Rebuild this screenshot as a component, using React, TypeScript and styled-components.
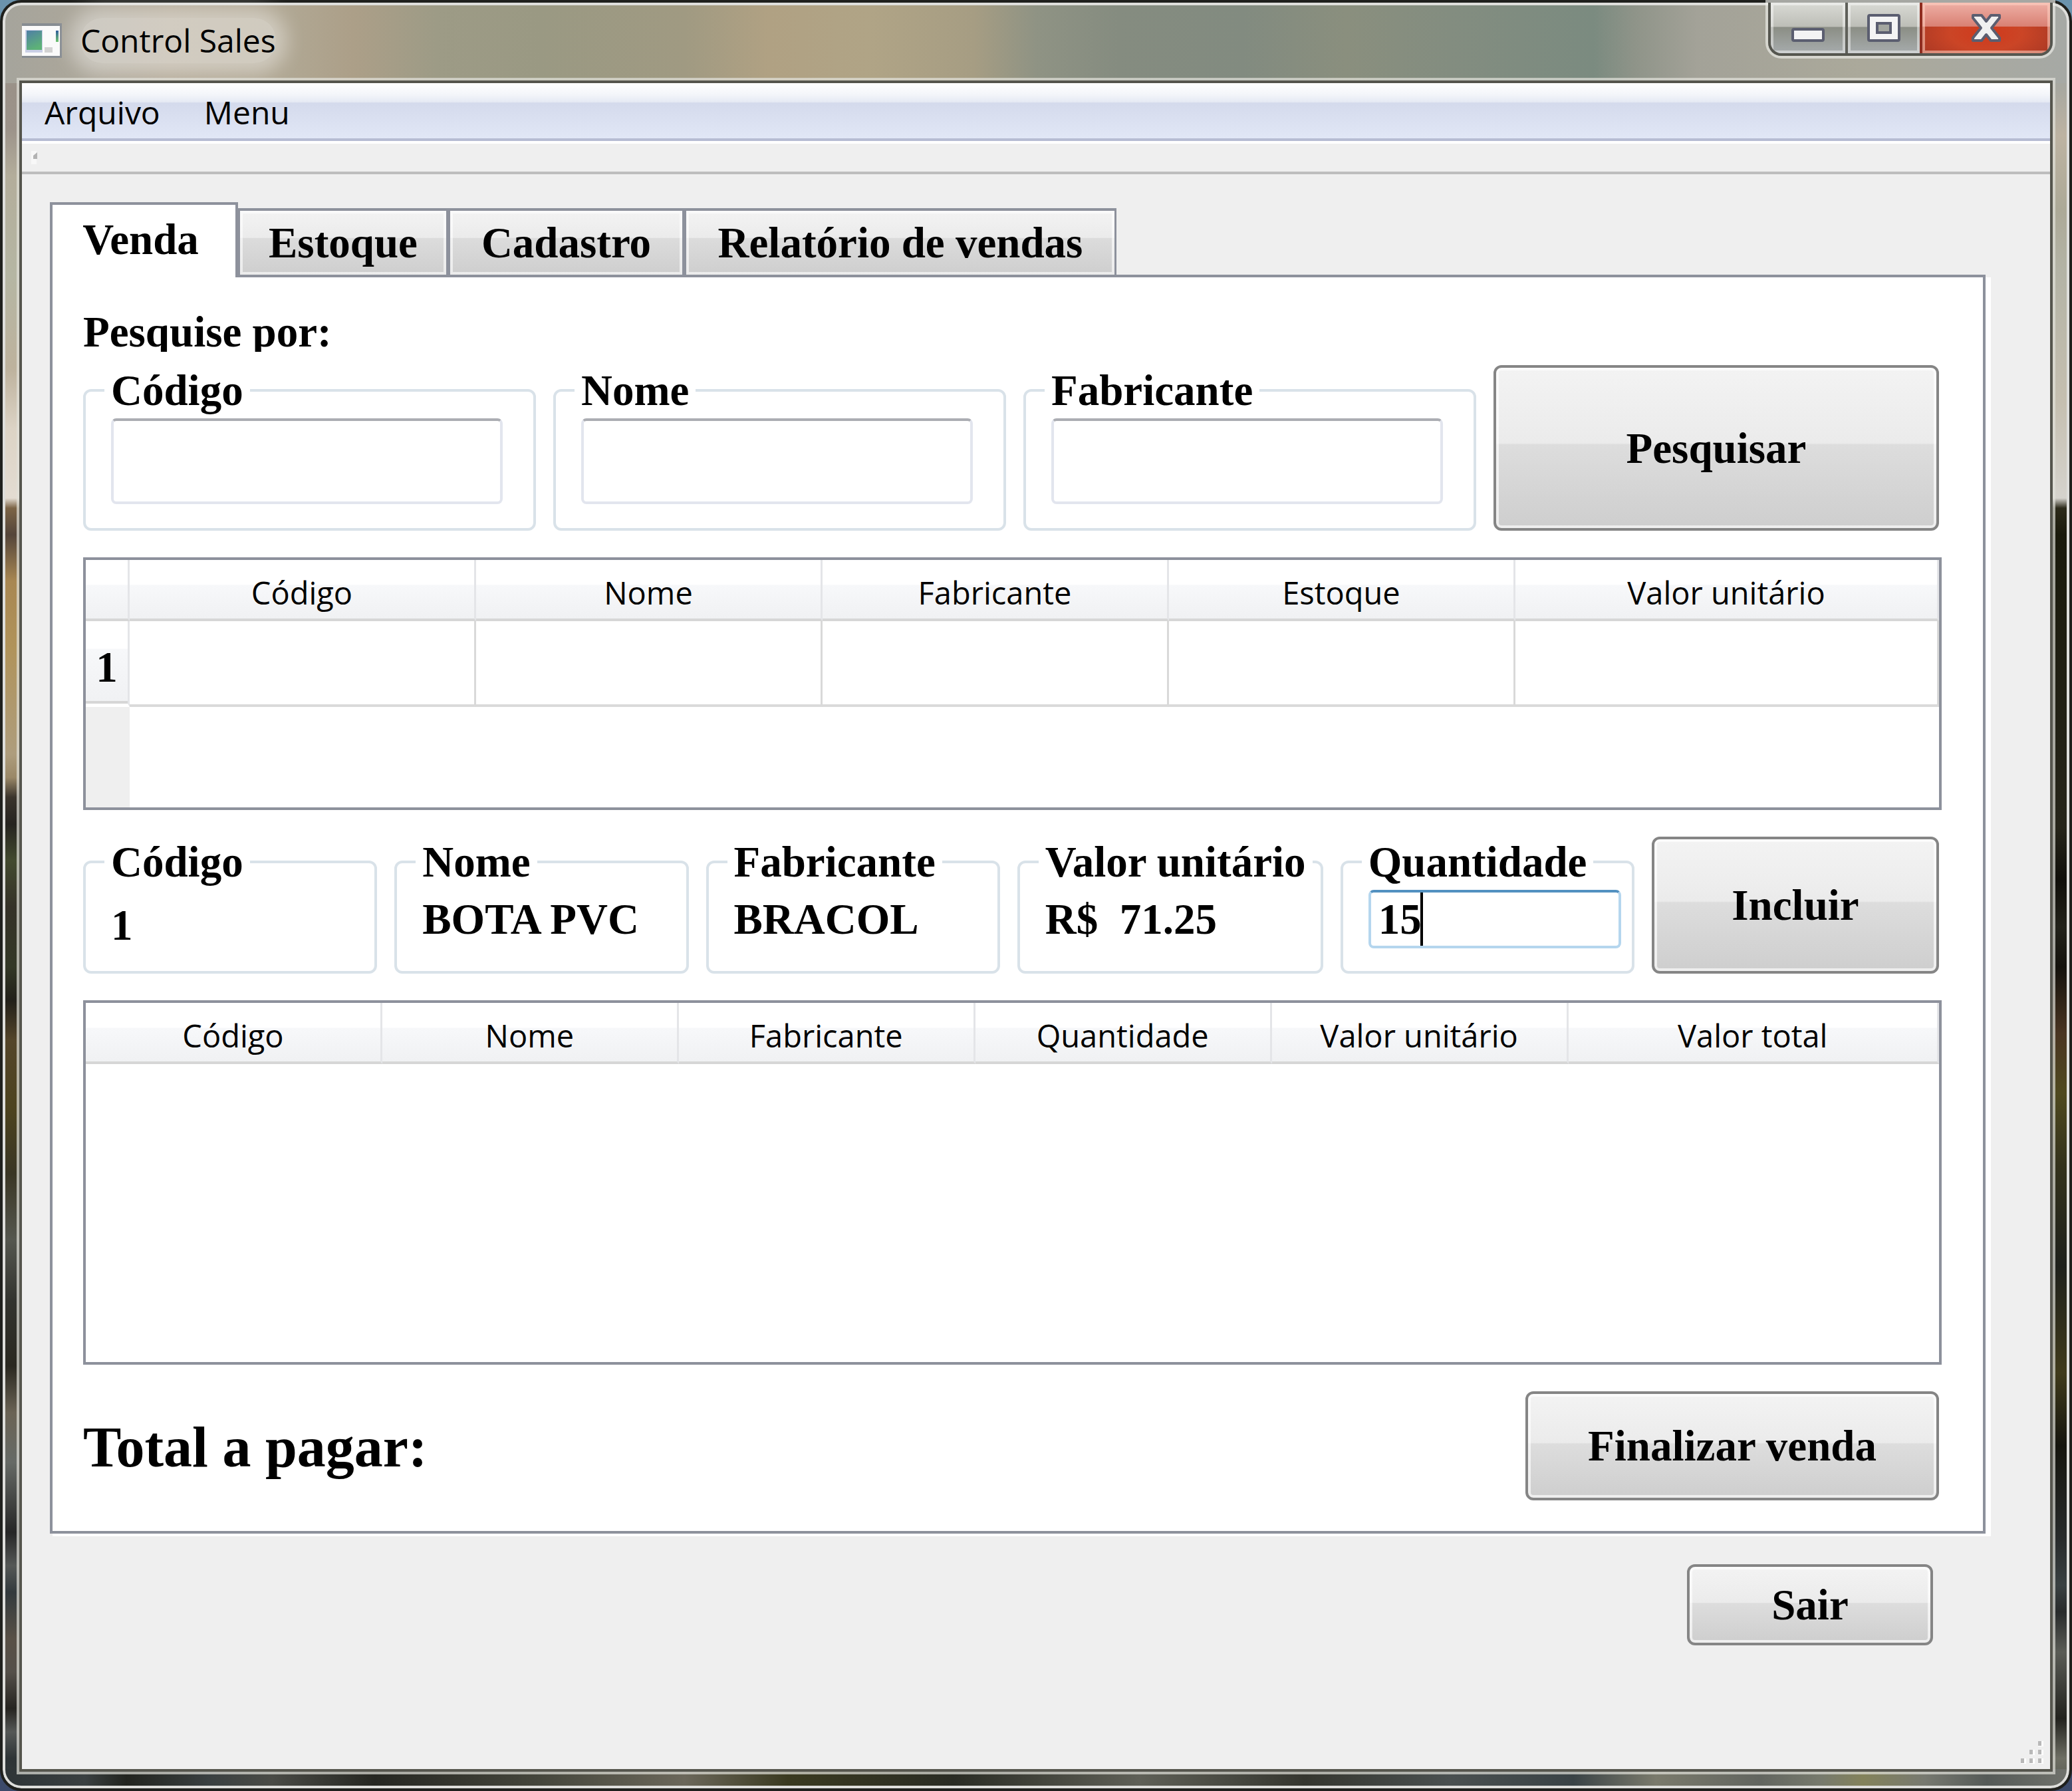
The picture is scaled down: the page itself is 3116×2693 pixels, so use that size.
import React, { useState } from "react";
import styled, { createGlobalStyle, css } from "styled-components";

const serif = `"Liberation Serif", "Times New Roman", serif`;
const sans = `"Open Sans", "Segoe UI", sans-serif`;
const line = "#8d919c";

const Global = createGlobalStyle`
  *, *::before, *::after { box-sizing: border-box; }
  body { margin: 0; font-family: ${sans}; font-size: 48px; color: #000; }
  button, input { font: inherit; color: inherit; margin: 0; }
`;

const leftGlass = `linear-gradient(180deg, #a5a49c 0, #9a9188 130px, #9c938a 190px, #b3ad9b 260px, #b5b6a3 410px,
  #bdb29d 550px, #dcd3c5 640px, #e3dcd2 745px, #7c6446 760px, #54453a 800px, #a88752 870px, #b0935a 970px,
  #ae9d7d 1130px, #9a8868 1165px, #3a342c 1195px, #262420 1235px, #434a2f 1290px, #353228 1360px,
  #333826 1450px, #22201a 1500px, #54452a 1560px, #4d431f 1660px, #3a3624 1760px, #55574f 1860px,
  #33342f 1950px, #2a2820 2050px, #6a6355 2120px, #666a66 2195px, #262626 2300px, #555856 2350px,
  #333a3d 2390px, #585046 2460px, #55504a 2510px, #262420 2565px, #555856 2600px, #2e3436 2640px, #343a3c 100%)`;
const rightGlass = `linear-gradient(180deg, #9fa7a7 0, #a8a8a0 130px, #bdb3a2 200px, #aca997 310px, #b3b3a5 400px,
  #c5bfb0 600px, #d5d3cd 745px, #2c2a1a 760px, #1a1a0c 800px, #26251a 1240px, #100f0a 1320px, #22221a 1390px,
  #14120c 1450px, #4a3522 1550px, #4f491f 1640px, #33321c 1750px, #1f211c 1900px, #403b1c 2060px,
  #15150e 2170px, #282b2b 2310px, #3a4142 2380px, #282b2b 2420px, #5a5c56 2480px, #22221e 2580px, #6e6f64 2640px, #55574f 100%)`;
const bottomGlass = `linear-gradient(90deg, #2e3436 0, #3a4041 4%, #22241f 6%, #3a4041 10%, #4a4b46 13%, #262722 18%,
  #45463c 26%, #6b675a 33%, #3a3a20 38%, #2a2c24 46%, #5f6057 55%, #35362f 63%, #4a5050 70%, #3a4346 76%,
  #7a7a6c 80%, #62655f 85%, #777a6d 88%, #83825b 90%, #777970 93%, #555a57 96%, #70726c 100%)`;
const topGlass = `linear-gradient(90deg, #a5a49c 0, #b4aa98 8%, #b0a793 14%, #ac9f88 17%, #9d9b86 21%, #9a9983 26%,
  #a09a82 33%, #b0a183 37%, #b0a486 42%, #a69d83 47%, #8f9384 50%, #858c80 54%, #828b80 60%, #8a8f7e 65%,
  #838d80 70%, #7b8b80 77%, #8f9489 79%, #a3a298 82%, #aba99b 90%, #a6a9a5 100%)`;

const Desktop = styled.div`
  min-height: 100vh;
  display: flex;
  background: linear-gradient(180deg, #6b93ad 0, #5b7d9b 50%, #3c4a6a 100%);
`;

const Frame = styled.main`
  flex: 1;
  min-width: 0;
  display: flex;
  flex-direction: column;
  padding: 0 25px 25px;
  border: 4px solid #1f201d;
  border-radius: 32px;
  box-shadow: inset 0 0 0 4px #dededb;
  background:
    ${topGlass} 0 0 / 100% 121px no-repeat,
    ${bottomGlass} 0 100% / 100% 29px no-repeat,
    ${leftGlass} 0 0 / 50% 100% no-repeat,
    ${rightGlass} 100% 0 / 50% 100% no-repeat;
`;

const TitleBar = styled.header`
  height: 117px;
  display: flex;
  align-items: flex-start;
  justify-content: space-between;
`;

const Caption = styled.div`
  display: flex;
  align-items: center;
  gap: 28px;
  padding: 23px 0 0 4px;
`;

const Title = styled.h1`
  margin: 0;
  font-size: 48px;
  line-height: 68px;
  font-weight: 400;
  border-radius: 32px;
  background: rgba(255, 255, 255, 0.4);
  box-shadow: 0 0 28px 16px rgba(255, 255, 255, 0.4);
`;

const Controls = styled.div`
  display: flex;
  border: 4px solid #55564f;
  border-top: 0;
  border-radius: 0 0 20px 20px;
  box-shadow: 0 0 0 4px rgba(240, 240, 235, 0.65);
  overflow: hidden;
`;

const Control = styled.button<{ $kind: "min" | "max" | "close" }>`
  height: 76px;
  padding: 0;
  border: 0;
  display: flex;
  align-items: center;
  justify-content: center;
  width: ${(p) => ({ min: 116, max: 112, close: 192 })[p.$kind]}px;
  ${(p) =>
    p.$kind === "close"
      ? css`
          background:
            linear-gradient(180deg, #eeb0a6 0, #d98073 47%, transparent 47%),
            radial-gradient(ellipse at 50% 60%, #d0391c 0, #cb4526 40%, #9e3424 100%);
          box-shadow: inset 0 0 0 4px rgba(255, 210, 195, 0.55);
        `
      : css`
          border-right: 4px solid ${p.$kind === "max" ? "#8f2d20" : "#5f605a"};
          background: linear-gradient(180deg, #d9dad5 0, #bdbeb7 47%, #8b8e85 49%, #a7acad 100%);
          box-shadow: inset 0 0 0 4px rgba(255, 255, 255, 0.45);
        `}
`;

const Client = styled.div`
  flex: 1;
  display: flex;
  flex-direction: column;
  border: 4px solid #55554d;
  box-shadow: 0 0 0 4px rgba(225, 225, 218, 0.7);
  background: #efefef;
`;

const MenuBar = styled.nav`
  height: 87px;
  display: flex;
  align-items: center;
  gap: 66px;
  padding: 5px 34px 0;
  border-bottom: 4px solid #b6bcd3;
  background: linear-gradient(180deg, #fff 0, #f4f6fa 20%, #e6eaf4 34%, #d4daec 36%, #e1e7f6 100%);
`;

const MenuItem = styled.button`
  padding: 0;
  border: 0;
  background: none;
  line-height: 68px;
`;

const ToolStrip = styled.div`
  height: 50px;
  display: flex;
  align-items: center;
  padding-left: 14px;
  border-top: 4px solid #fff;
  border-bottom: 4px solid #bdbdbd;
`;

const Content = styled.div`
  flex: 1;
  display: flex;
  flex-direction: column;
  padding: 42px 97px 0 42px;
`;

const Tabs = styled.div`
  display: flex;
  align-items: flex-end;
  height: 109px;
`;

const Tab = styled.button<{ $width: number; $active: boolean }>`
  width: ${(p) => p.$width}px;
  height: 100px;
  padding: 0;
  white-space: nowrap;
  font: bold 65px/76px ${serif};
  border: 4px solid ${line};
  border-left-width: 3px;
  border-right-width: 3px;
  border-bottom: 0;
  background: linear-gradient(180deg, #f3f3f3 0, #ebebeb 42%, #dcdcdc 43%, #cecece 100%);
  box-shadow: inset 0 0 0 4px rgba(255, 255, 255, 0.6);
  ${(p) =>
    p.$active &&
    css`
      position: relative;
      height: 113px;
      margin-bottom: -4px;
      padding: 0 10px 6px 0;
      border-left-width: 4px;
      border-right-width: 4px;
      background: #fff;
      box-shadow: none;
    `}
`;

const Panel = styled.section`
  display: flex;
  flex-direction: column;
  gap: 40px;
  padding: 44px 62px 46px 46px;
  border: 4px solid ${line};
  background: #fff;
  box-shadow: 4px 4px 0 #fff, 8px 4px 0 #fff;
`;

const Search = styled.div`
  display: flex;
  flex-direction: column;
  gap: 20px;
`;

const SearchTitle = styled.h2`
  margin: 0;
  height: 68px;
  overflow: hidden;
  font: bold 65px/76px ${serif};
`;

const FieldRow = styled.form<{ $columns: string; $height: number }>`
  display: grid;
  grid-template-columns: ${(p) => p.$columns};
  column-gap: 26px;
  height: ${(p) => p.$height}px;
  margin-right: 4px;
`;

const Group = styled.fieldset<{ $right?: number }>`
  min-width: 0;
  margin: 0;
  padding: 4px ${(p) => p.$right ?? 16}px 0 38px;
  border: 4px solid #d9e2e9;
  border-radius: 12px;
  font: bold 65px/76px ${serif};
`;

const Legend = styled.legend`
  margin-left: -10px;
  padding: 0 10px;
  white-space: nowrap;
`;

const Value = styled.output<{ $tall?: boolean }>`
  display: block;
  white-space: pre;
  line-height: ${(p) => (p.$tall ? 106 : 88)}px;
`;

const SearchInput = styled.input`
  display: block;
  width: 100%;
  height: 129px;
  padding: 0 11px;
  border: 4px solid #e2e5ee;
  border-top-color: #abadb3;
  border-radius: 8px;
  background: #fff;
  outline: 0;
`;

const CaretBox = styled.div`
  position: relative;
`;

const QuantityInput = styled(SearchInput)`
  height: 88px;
  border-color: #b5d6ee;
  border-top-color: #5290c0;
  caret-color: transparent;
`;

const Caret = styled.span`
  position: absolute;
  top: 4px;
  bottom: 4px;
  left: 78px;
  width: 4px;
  background: #000;
`;

const PushButton = styled.button`
  padding: 0;
  border: 4px solid #858585;
  border-radius: 12px;
  font: bold 65px/76px ${serif};
  background: linear-gradient(180deg, #f3f3f3 0, #ebebeb 47%, #dddddd 48%, #cecece 100%);
  box-shadow: inset 0 0 0 4px rgba(255, 255, 255, 0.65);
`;

const WideButton = styled(PushButton)`
  width: 622px;
  height: 164px;
`;

const ExitButton = styled(PushButton)`
  width: 370px;
  height: 122px;
`;

const GridBox = styled.div<{ $height: number; $rowHeader?: boolean }>`
  height: ${(p) => p.$height}px;
  border: 4px solid ${line};
  background: ${(p) => (p.$rowHeader ? "linear-gradient(90deg, #efefef 66px, #fff 66px)" : "#fff")};
`;

const Table = styled.table`
  width: 100%;
  table-layout: fixed;
  border-collapse: separate;
  border-spacing: 0;
`;

const HeadCell = styled.th`
  height: 92px;
  padding: 10px 0 0;
  font-size: 47px;
  font-weight: 400;
  line-height: 68px;
  border-right: 3px solid #e4e5e8;
  border-bottom: 4px solid #d6d6d6;
  background: linear-gradient(180deg, #fff 0, #fff 42%, #f7f8fa 43%, #f0f1f3 100%);
`;

const RowHead = styled.th`
  height: 129px;
  padding: 14px 0 0;
  font: bold 65px/76px ${serif};
  border-right: 3px solid #e4e5e8;
  border-bottom: 5px solid #fff;
  background: linear-gradient(180deg, #fff 0, #fff 33%, #f7f8fa 34%, #f0f1f3 100%);
  box-shadow: inset 0 -4px 0 #d6d6d6;
`;

const Cell = styled.td`
  padding: 0;
  border-right: 3px solid #d9d9d9;
  border-bottom: 4px solid #dadada;
  background: #fff;
`;

const Footer = styled.div`
  display: flex;
  align-items: center;
  justify-content: space-between;
  margin-right: 4px;
`;

const Total = styled.p`
  margin: 0;
  padding-top: 4px;
  font: bold 86px/96px ${serif};
`;

const ExitBar = styled.div`
  display: flex;
  justify-content: flex-end;
  padding: 46px 79px 0 0;
`;

const StatusBar = styled.footer`
  display: flex;
  justify-content: flex-end;
  padding: 0 10px 6px 0;
`;

const AppIcon = () => (
  <svg width="60" height="54" viewBox="0 0 60 54" aria-hidden="true">
    <defs>
      <linearGradient id="screen" x1="0" y1="0" x2="0.4" y2="1">
        <stop offset="0" stopColor="#4f7fa6" />
        <stop offset="1" stopColor="#5db277" />
      </linearGradient>
      <linearGradient id="bar" x1="0" y1="0" x2="0" y2="1">
        <stop offset="0" stopColor="#2c5a9a" />
        <stop offset="1" stopColor="#6cc36a" />
      </linearGradient>
    </defs>
    <rect x="0" y="1" width="61" height="52" fill="#878c92" />
    <rect x="0" y="5" width="57" height="45" fill="#fafafa" />
    <rect x="5" y="11" width="26" height="34" fill="#c9cfe6" />
    <rect x="7" y="12" width="23" height="29" fill="url(#screen)" />
    <rect x="34" y="37" width="12" height="8" fill="#d2d2d2" />
    <rect x="51" y="12" width="4" height="17" fill="url(#bar)" />
  </svg>
);

const MinimizeIcon = () => (
  <svg width="50" height="42" viewBox="0 0 50 42" aria-hidden="true">
    <rect x="2" y="23" width="46" height="17" rx="2" fill="#f4f4f4" stroke="#5b5e70" strokeWidth="4" />
  </svg>
);

const MaximizeIcon = () => (
  <svg width="50" height="42" viewBox="0 0 50 42" aria-hidden="true">
    <rect x="2" y="2" width="46" height="38" rx="2" fill="#f4f4f4" stroke="#5b5e70" strokeWidth="4" />
    <rect x="15" y="14" width="20" height="14" fill="#a3a69f" stroke="#5b5e70" strokeWidth="4" />
  </svg>
);

const CloseIcon = () => (
  <svg width="46" height="42" viewBox="0 0 46 42" aria-hidden="true">
    <path
      d="M3 2h13l7 9 7-9h13v4L31 21l12 15v4H30l-7-9-7 9H3v-4l12-15L3 6z"
      fill="#f0f0f0"
      stroke="#5b5e70"
      strokeWidth="4"
      strokeLinejoin="round"
    />
  </svg>
);

const HandleDot = () => (
  <svg width="12" height="24" viewBox="0 0 12 24" aria-hidden="true">
    <rect x="0" y="2" width="8" height="20" fill="#f8f8f8" />
    <path d="M3 9l6-5v10H3z" fill="#b3b3b3" />
  </svg>
);

const SizeGrip = () => (
  <svg width="34" height="38" viewBox="0 0 34 38" aria-hidden="true">
    {[
      [26, 2],
      [13, 15],
      [26, 15],
      [0, 28],
      [13, 28],
      [26, 28],
    ].map(([x, y]) => (
      <g key={`${x}-${y}`}>
        <rect x={x} y={y} width="8" height="8" fill="#fff" />
        <rect x={x} y={y} width="5" height="7" fill="#b8b8b8" />
      </g>
    ))}
  </svg>
);

const tabs = [
  { label: "Venda", width: 283 },
  { label: "Estoque", width: 316 },
  { label: "Cadastro", width: 355 },
  { label: "Relatório de vendas", width: 650 },
];
const searchFields = ["Código", "Nome", "Fabricante"];
const stockColumns = ["Código", "Nome", "Fabricante", "Estoque", "Valor unitário"];
const item = [
  { label: "Código", value: "1", tall: true },
  { label: "Nome", value: "BOTA PVC" },
  { label: "Fabricante", value: "BRACOL" },
  { label: "Valor unitário", value: "R$  71.25" },
];
const saleColumns = ["Código", "Nome", "Fabricante", "Quantidade", "Valor unitário", "Valor total"];

const stay = (e: React.FormEvent) => e.preventDefault();

export default function App() {
  const [active, setActive] = useState("Venda");
  const [quantity, setQuantity] = useState("15");

  return (
    <Desktop>
      <Global />
      <Frame>
        <TitleBar>
          <Caption>
            <AppIcon />
            <Title>Control Sales</Title>
          </Caption>
          <Controls>
            <Control $kind="min" aria-label="Minimizar">
              <MinimizeIcon />
            </Control>
            <Control $kind="max" aria-label="Maximizar">
              <MaximizeIcon />
            </Control>
            <Control $kind="close" aria-label="Fechar">
              <CloseIcon />
            </Control>
          </Controls>
        </TitleBar>
        <Client>
          <MenuBar>
            <MenuItem>Arquivo</MenuItem>
            <MenuItem>Menu</MenuItem>
          </MenuBar>
          <ToolStrip>
            <HandleDot />
          </ToolStrip>
          <Content>
            <Tabs role="tablist">
              {tabs.map((t) => (
                <Tab
                  key={t.label}
                  role="tab"
                  aria-selected={t.label === active}
                  $active={t.label === active}
                  $width={t.width}
                  onClick={() => setActive(t.label)}
                >
                  {t.label}
                </Tab>
              ))}
            </Tabs>
            <Panel role="tabpanel">
              <Search>
                <SearchTitle>Pesquise por:</SearchTitle>
                <FieldRow $columns="1fr 1fr 1fr 670px" $height={249} onSubmit={stay}>
                  {searchFields.map((label) => (
                    <Group key={label} $right={46}>
                      <Legend>
                        <label htmlFor={`search-${label}`}>{label}</label>
                      </Legend>
                      <SearchInput id={`search-${label}`} type="text" />
                    </Group>
                  ))}
                  <PushButton type="submit">Pesquisar</PushButton>
                </FieldRow>
              </Search>

              <GridBox $height={380} $rowHeader>
                <Table>
                  <colgroup>
                    <col style={{ width: 66 }} />
                    {stockColumns.map((c, i) => (
                      <col key={c} style={i < 4 ? { width: 521 } : undefined} />
                    ))}
                  </colgroup>
                  <thead>
                    <tr>
                      <HeadCell />
                      {stockColumns.map((c) => (
                        <HeadCell key={c} scope="col">
                          {c}
                        </HeadCell>
                      ))}
                    </tr>
                  </thead>
                  <tbody>
                    <tr>
                      <RowHead scope="row">1</RowHead>
                      {stockColumns.map((c) => (
                        <Cell key={c} />
                      ))}
                    </tr>
                  </tbody>
                </Table>
              </GridBox>

              <FieldRow $columns="1fr 1fr 1fr 460px 1fr 432px" $height={206} onSubmit={stay}>
                {item.map((f) => (
                  <Group key={f.label}>
                    <Legend>{f.label}</Legend>
                    <Value $tall={f.tall}>{f.value}</Value>
                  </Group>
                ))}
                <Group>
                  <Legend>
                    <label htmlFor="quantity">Quantidade</label>
                  </Legend>
                  <CaretBox>
                    <QuantityInput
                      id="quantity"
                      type="text"
                      value={quantity}
                      onChange={(e) => setQuantity(e.target.value)}
                    />
                    <Caret />
                  </CaretBox>
                </Group>
                <PushButton type="submit">Incluir</PushButton>
              </FieldRow>

              <GridBox $height={548}>
                <Table>
                  <colgroup>
                    {saleColumns.map((c, i) => (
                      <col key={c} style={{ width: i < 5 ? "16%" : "20%" }} />
                    ))}
                  </colgroup>
                  <thead>
                    <tr>
                      {saleColumns.map((c) => (
                        <HeadCell key={c} scope="col">
                          {c}
                        </HeadCell>
                      ))}
                    </tr>
                  </thead>
                </Table>
              </GridBox>

              <Footer>
                <Total>Total a pagar:</Total>
                <WideButton>Finalizar venda</WideButton>
              </Footer>
            </Panel>
            <ExitBar>
              <ExitButton>Sair</ExitButton>
            </ExitBar>
          </Content>
          <StatusBar>
            <SizeGrip />
          </StatusBar>
        </Client>
      </Frame>
    </Desktop>
  );
}
